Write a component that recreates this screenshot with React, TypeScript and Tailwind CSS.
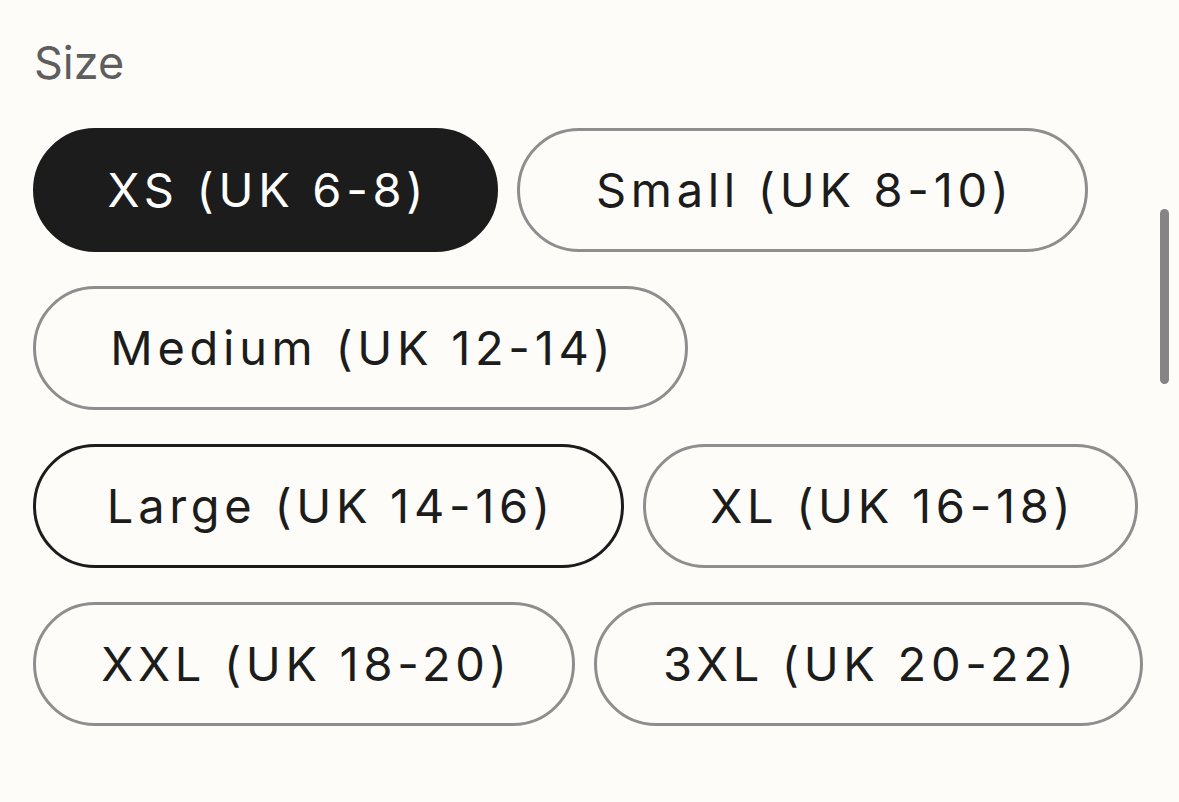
import React, { useState } from 'react'

type SizeOption = {
  id: string
  label: string
  width: string
}

const SIZES: SizeOption[] = [
  { id: 'xs', label: 'XS (UK 6-8)', width: 'w-[465px]' },
  { id: 's', label: 'Small (UK 8-10)', width: 'w-[571px]' },
  { id: 'm', label: 'Medium (UK 12-14)', width: 'w-[655px]' },
  { id: 'l', label: 'Large (UK 14-16)', width: 'w-[591px]' },
  { id: 'xl', label: 'XL (UK 16-18)', width: 'w-[495px]' },
  { id: 'xxl', label: 'XXL (UK 18-20)', width: 'w-[542px]' },
  { id: '3xl', label: '3XL (UK 20-22)', width: 'w-[549px]' },
]

const App: React.FC = () => {
  const [selected, setSelected] = useState('xs')
  const [hovered, setHovered] = useState<string | null>('l')

  return (
    <div className="relative w-[1179px] h-[802px] overflow-hidden bg-[#fdfcf8]">
      <div className="pl-[33px] pr-[31px] pt-[36px]">
        <p className="text-[45px] leading-[54px] text-[#5e5e5e] font-['Inter',sans-serif] pl-px">
          Size
        </p>

        <div className="mt-[38px] flex flex-wrap gap-x-[19px] gap-y-[34px]">
          {SIZES.map((size) => {
            const isSelected = selected === size.id
            const isHovered = hovered === size.id
            return (
              <button
                key={size.id}
                onClick={() => setSelected(size.id)}
                onMouseEnter={() => setHovered(size.id)}
                className={`${size.width} h-[124px] rounded-full flex items-center justify-center pl-[0.1em] text-[47px] tracking-[0.1em] font-['Inter',sans-serif] border-[3px] ${
                  isSelected
                    ? 'bg-[#1c1c1c] border-[#1c1c1c] text-white'
                    : isHovered
                      ? 'bg-[#fdfcf8] border-[#1c1c1c] text-[#1c1c1c]'
                      : 'bg-[#fdfcf8] border-[#8e8e8e] text-[#1c1c1c]'
                }`}
              >
                {size.label}
              </button>
            )
          })}
        </div>
      </div>

      {/* scrollbar thumb */}
      <div className="absolute left-[1160px] top-[209px] w-[9px] h-[175px] rounded-full bg-[#858585]" />
    </div>
  )
}

export default App
